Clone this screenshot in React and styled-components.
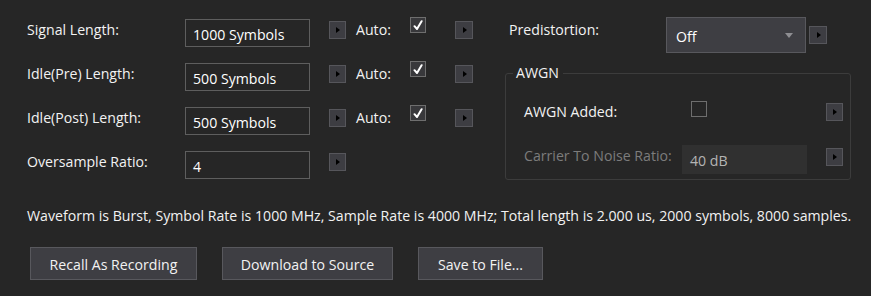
import React from 'react';
import styled, { createGlobalStyle } from 'styled-components';

const GlobalStyle = createGlobalStyle`
    html, body {
        margin: 0;
        padding: 0;
        background: #262626;
    }
    body {
        font-family: "Open Sans", "Noto Sans", sans-serif;
        font-size: 14.15px;
        color: #f2f2f2;
    }
`

const Page = styled.div`
    width: 871px;
    height: 296px;
    box-sizing: border-box;
    padding: 19px 0 0 27px;
    background: #262626;
    overflow: hidden;
`
const TopArea = styled.div`
    display: flex;
    align-items: flex-start;
`
const LeftColumn = styled.div`
    display: flex;
    flex-direction: column;
    gap: 16px;
`
const Row = styled.div`
    display: flex;
    align-items: flex-start;
    height: 28px;
`
const Label = styled.div`
    width: ${p => p.$w || 158}px;
    line-height: 22px;
    color: ${p => p.$disabled ? '#7c7c7c' : '#f2f2f2'};
    white-space: nowrap;
    margin-top: ${p => p.$top || 0}px;
`
const TextBox = styled.div`
    box-sizing: border-box;
    width: 125px;
    height: ${p => p.$h || 28}px;
    padding: 4px 7px 0;
    line-height: 22px;
    border: 1px solid ${p => p.$disabled ? 'transparent' : '#5e5e5e'};
    background: ${p => p.$disabled ? '#303030' : '#262626'};
    color: ${p => p.$disabled ? '#b4b4b4' : '#ffffff'};
    white-space: nowrap;
`
const ArrowButton = styled.div`
    box-sizing: border-box;
    width: ${p => p.$w || 17}px;
    height: 18px;
    margin-left: ${p => p.$left || 0}px;
    margin-top: ${p => p.$top || 0}px;
    background: #3d3d42;
    border: 1px solid #56565b;
    display: flex;
    align-items: center;
    justify-content: center;
    flex-shrink: 0;
    &::after {
        content: '';
        border-style: solid;
        border-width: 3.5px 0 3.5px 4px;
        border-color: transparent transparent transparent #000;
        margin-left: 1px;
    }
`
const AutoLabel = styled.div`
    width: 54px;
    margin-left: 10px;
    line-height: 22px;
`
const CheckBox = styled.div`
    box-sizing: border-box;
    width: 16px;
    height: 16px;
    margin-top: ${p => p.$top || 0}px;
    border: 1px solid #6e6e6e;
    background: ${p => p.$checked ? '#38383b' : 'transparent'};
    display: flex;
    align-items: center;
    justify-content: center;
    flex-shrink: 0;
`
const RightColumn = styled.div`
    margin: -2px 0 0 32px;
    width: 346px;
    display: flex;
    flex-direction: column;
    gap: 20px;
`
const PredRow = styled.div`
    display: flex;
    align-items: flex-start;
    padding-left: 4px;
`
const Dropdown = styled.div`
    box-sizing: border-box;
    width: 140px;
    height: 36px;
    background: #3e3e43;
    border: 1px solid #58585d;
    display: flex;
    align-items: center;
    justify-content: space-between;
    padding: 2px 12px 0 9px;
    color: #ffffff;
    &::after {
        content: '';
        border-style: solid;
        border-width: 5px 4.5px 0 4.5px;
        border-color: #8e8e92 transparent transparent transparent;
        margin-top: -2px;
    }
`
const GroupBox = styled.div`
    position: relative;
    box-sizing: border-box;
    height: 107px;
    border: 1px solid #3c3c3c;
    border-radius: 3px;
    padding: 27px 7px 0 18px;
`
const Legend = styled.span`
    position: absolute;
    top: -11px;
    left: 7px;
    padding: 0 4px 0 3px;
    line-height: 20px;
    background: #262626;
    color: #f2f2f2;
`
const GroupRow = styled.div`
    display: flex;
    align-items: flex-start;
    margin-top: ${p => p.$top || 0}px;
`
const Spacer = styled.div`
    flex: 1;
`
const Summary = styled.div`
    margin-top: 26px;
    line-height: 20px;
    white-space: nowrap;
`
const ButtonRow = styled.div`
    display: flex;
    gap: 25px;
    margin: 21px 0 0 3px;
`
const Button = styled.div`
    box-sizing: border-box;
    width: ${p => p.$w}px;
    height: 33px;
    background: #3e3e43;
    border: 1px solid #58585d;
    display: flex;
    align-items: center;
    justify-content: center;
    color: #f2f2f2;
    padding-top: 1px;
`

const Check = () => (
    <svg width="10" height="11" viewBox="0 0 10 11">
        <path d="M1.5 6.2 L4 9 L8.6 1.2" fill="none" stroke="#ffffff" strokeWidth="2" strokeLinecap="round" strokeLinejoin="round" />
    </svg>
)

const lengthRows = [
    { label: 'Signal Length:', value: '1000 Symbols' },
    { label: 'Idle(Pre) Length:', value: '500 Symbols' },
    { label: 'Idle(Post) Length:', value: '500 Symbols' },
]

const App = () => {
    return (
        <Page>
            <GlobalStyle />
            <TopArea>
                <LeftColumn>
                    {lengthRows.map(r => (
                        <Row key={r.label}>
                            <Label>{r.label}</Label>
                            <TextBox>{r.value}</TextBox>
                            <ArrowButton $left={19} $top={2} />
                            <AutoLabel>Auto:</AutoLabel>
                            <CheckBox $checked $top={-2}><Check /></CheckBox>
                            <ArrowButton $left={29} $top={2} $w={18} />
                        </Row>
                    ))}
                    <Row>
                        <Label>Oversample Ratio:</Label>
                        <TextBox>4</TextBox>
                        <ArrowButton $left={19} $top={2} />
                    </Row>
                </LeftColumn>
                <RightColumn>
                    <PredRow>
                        <Label $w={157} $top={2}>Predistortion:</Label>
                        <Dropdown>Off</Dropdown>
                        <ArrowButton $left={3} $top={9} $w={18} />
                    </PredRow>
                    <GroupBox>
                        <Legend>AWGN</Legend>
                        <GroupRow>
                            <Label $w={167}>AWGN Added:</Label>
                            <CheckBox />
                            <Spacer />
                            <ArrowButton $top={2} />
                        </GroupRow>
                        <GroupRow $top={22}>
                            <Label $disabled>Carrier To Noise Ratio:</Label>
                            <TextBox $disabled $h={29}>40 dB</TextBox>
                            <Spacer />
                            <ArrowButton $top={3} />
                        </GroupRow>
                    </GroupBox>
                </RightColumn>
            </TopArea>
            <Summary>
                Waveform is Burst, Symbol Rate is 1000 MHz, Sample Rate is 4000 MHz; Total length is 2.000 us, 2000 symbols, 8000 samples.
            </Summary>
            <ButtonRow>
                <Button $w={167}>Recall As Recording</Button>
                <Button $w={171}>Download to Source</Button>
                <Button $w={125}>Save to File...</Button>
            </ButtonRow>
        </Page>
    );
};

export default App;
